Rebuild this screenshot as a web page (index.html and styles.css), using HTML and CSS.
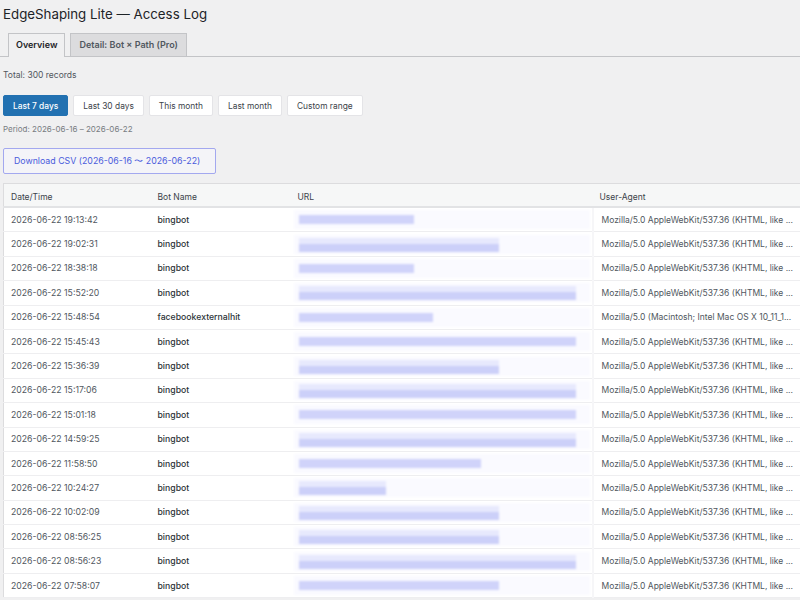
FILE: index.html
```html
<!DOCTYPE html>
<html lang="en">
<head>
    <meta charset="UTF-8">
    <meta name="viewport" content="width=device-width, initial-scale=1.0">
    <title>EdgeShaping Lite — Access Log</title>
    <link rel="stylesheet" href="styles.css">
</head>
<body>
    <div class="wrap">
        <h1>EdgeShaping Lite — Access Log</h1>

        <nav class="tabs">
            <a class="tab active">Overview</a>
            <a class="tab">Detail: Bot × Path (Pro)</a>
        </nav>

        <p class="total">Total: 300 records</p>

        <div class="ranges">
            <button class="range primary">Last 7 days</button>
            <button class="range">Last 30 days</button>
            <button class="range">This month</button>
            <button class="range">Last month</button>
            <button class="range">Custom range</button>
        </div>
        <p class="period">Period: 2026-06-16 – 2026-06-22</p>

        <button class="download">Download CSV (2026-06-16 〜 2026-06-22)</button>

        <table class="log">
            <colgroup>
                <col class="c-date">
                <col class="c-bot">
                <col class="c-url">
                <col class="c-ua">
            </colgroup>
            <thead>
                <tr><th>Date/Time</th><th>Bot Name</th><th>URL</th><th>User-Agent</th></tr>
            </thead>
            <tbody id="rows"></tbody>
        </table>
    </div>

    <script>
        // rows: time, bot, url bar width (px), two-line url?
        const UA_BING = 'Mozilla/5.0 AppleWebKit/537.36 (KHTML, like ...';
        const UA_FB = 'Mozilla/5.0 (Macintosh; Intel Mac OS X 10_11_1...';
        const rows = [
            ['19:13:42', 'bingbot', 115, false],
            ['19:02:31', 'bingbot', 200, true],
            ['18:38:18', 'bingbot', 115, false],
            ['15:52:20', 'bingbot', 277, true],
            ['15:48:54', 'facebookexternalhit', 134, false],
            ['15:45:43', 'bingbot', 277, false],
            ['15:36:39', 'bingbot', 200, true],
            ['15:17:06', 'bingbot', 277, true],
            ['15:01:18', 'bingbot', 277, false],
            ['14:59:25', 'bingbot', 277, true],
            ['11:58:50', 'bingbot', 182, false],
            ['10:24:27', 'bingbot', 87, true],
            ['10:02:09', 'bingbot', 200, true],
            ['08:56:25', 'bingbot', 200, true],
            ['08:56:23', 'bingbot', 277, true],
            ['07:58:07', 'bingbot', 200, false]
        ];

        const tbody = document.getElementById('rows');
        rows.forEach(([time, bot, w, twoLine]) => {
            const tr = document.createElement('tr');
            const ua = bot === 'facebookexternalhit' ? UA_FB : UA_BING;
            tr.innerHTML =
                `<td>2026-06-22 ${time}</td>` +
                `<td class="bot">${bot}</td>` +
                `<td class="url"><div class="masked${twoLine ? ' two' : ''}">` +
                    `<span class="bar" style="width:${w}px"></span></div></td>` +
                `<td class="ua">${ua}</td>`;
            tbody.appendChild(tr);
        });
    </script>
</body>
</html>
```

FILE: styles.css
```css
body {
    margin: 0;
    padding: 0;
    background-color: #f0f0f1;
    color: #50575e;
    font-family: Inter, 'Liberation Sans', sans-serif;
    font-size: 8.5px;
    overflow: hidden;
}

.wrap {
    padding: 0 0 0 3px;
}

h1 {
    margin: 0;
    padding: 4px 0 0;
    font-size: 13.3px;
    font-weight: 400;
    line-height: 20px;
    color: #1d2327;
}

.tabs {
    display: flex;
    gap: 5px;
    margin: 9px 0 0 -3px;
    padding-left: 8px;
    border-bottom: 1px solid #c3c4c7;
    height: 23px;
}

.tab {
    display: block;
    height: 22px;
    line-height: 22px;
    padding: 0 8px;
    font-size: 9px;
    font-weight: 600;
    color: #50575e;
    background-color: #dcdcde;
    border: 1px solid #c3c4c7;
    border-bottom: none;
}

.tab.active {
    padding: 0 7px;
    color: #1d2327;
    background-color: #f0f0f1;
    height: 23px;
}

.total {
    margin: 12px 0 0;
    line-height: 12px;
    color: #50575e;
}

.ranges {
    display: flex;
    gap: 5px;
    margin-top: 14px;
}

.range {
    height: 21px;
    padding: 0 9px;
    font-family: inherit;
    font-size: 8.4px;
    color: #3c434a;
    background-color: #fff;
    border: 1px solid #e4e4e7;
    border-radius: 2px;
}

.range.primary {
    color: #fff;
    font-weight: 500;
    background-color: #2271b1;
    border-color: #2271b1;
}

.period {
    margin: 7px 0 0;
    font-size: 8px;
    line-height: 12px;
    color: #787c82;
}

.download {
    display: block;
    margin-top: 13px;
    width: 213px;
    height: 26px;
    padding: 0 0 0 10px;
    text-align: left;
    font-family: inherit;
    font-size: 8.8px;
    color: #4a5bdc;
    background-color: #f4f4f8;
    border: 1px solid #a3a8ef;
    border-radius: 2px;
}

.log {
    margin-top: 9px;
    width: 849px;
    table-layout: fixed;
    border-collapse: collapse;
    background-color: #fff;
    border: 1px solid #dcdcde;
}

.c-date { width: 147px; }
.c-bot { width: 140px; }
.c-url { width: 302px; }
.c-ua { width: 260px; }

.log th {
    height: 19px;
    padding: 3px 7px 0;
    text-align: left;
    font-weight: 400;
    color: #3c434a;
    background-color: #f6f7f7;
    border-bottom: 2px solid #e2e3e5;
}

.log td {
    height: 23.4px;
    padding: 0 7px;
    font-size: 8.7px;
    white-space: nowrap;
    overflow: hidden;
    border-bottom: 1px solid #eeeef0;
}

.log td.bot {
    color: #2c3338;
    font-weight: 500;
}

.log td.ua {
    padding-left: 8px;
    font-size: 8.5px;
    color: #50575e;
    border-left: 2px solid #f6f6f8;
}

.log td.url {
    padding: 0 2px 0 3px;
}

.masked {
    height: 19px;
    padding: 5px 0 0 5px;
    box-sizing: border-box;
    background-color: #fafaff;
    filter: blur(1.2px);
}

.masked .bar {
    display: block;
    height: 9px;
    background-color: #d0d3fa;
}

.masked.two {
    padding-top: 3px;
}

.masked.two .bar {
    height: 14px;
    background: linear-gradient(#e7e9fd 45%, #ccd0f9 45%);
}
```
